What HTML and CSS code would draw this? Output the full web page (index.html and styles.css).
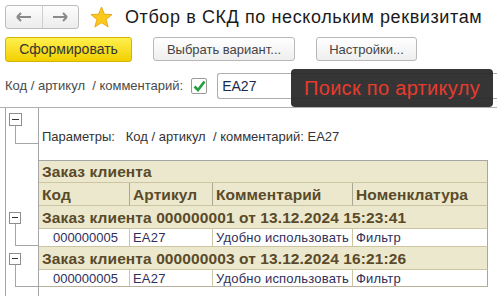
FILE: index.html
```html
<!DOCTYPE html>
<html lang="ru">
<head>
<meta charset="utf-8">
<link rel="stylesheet" href="styles.css">
</head>
<body>
<div class="page">
  <div class="topbar">
    <div class="nav">
      <div class="nav-btn">
        <svg width="16" height="10" viewBox="0 0 16 10"><path d="M1 5H15M1 5L5 1M1 5L5 9" stroke="#8a8a8a" stroke-width="2" fill="none"/></svg>
      </div>
      <div class="nav-btn">
        <svg width="16" height="10" viewBox="0 0 16 10"><path d="M1 5H15M15 5L11 1M15 5L11 9" stroke="#8a8a8a" stroke-width="2" fill="none"/></svg>
      </div>
    </div>
    <svg class="star" width="23" height="22" viewBox="0 0 24 23"><polygon points="12,1 15,8.6 23,9 16.8,14 19,22 12,17.4 5,22 7.2,14 1,9 9,8.6" fill="#fbc81c" stroke="#e9a61a" stroke-width="1" stroke-linejoin="round"/></svg>
    <h1 class="title">Отбор в СКД по нескольким реквизитам</h1>
  </div>
  <div class="buttons">
    <button class="btn btn-primary">Сформировать</button>
    <button class="btn btn-variant">Выбрать вариант...</button>
    <button class="btn btn-settings">Настройки...</button>
  </div>
  <div class="filter">
    <span class="filter-label">Код / артикул&nbsp; / комментарий:</span>
    <span class="checkbox">
      <svg width="13" height="12" viewBox="0 0 13 12"><path d="M1.5 6.5L5 10L11.5 1.5" stroke="#1fa03a" stroke-width="2.6" fill="none"/></svg>
    </span>
    <div class="input">EA27</div>
  </div>
  <div class="tooltip">Поиск по артикулу</div>
  <div class="report">
    <div class="block block-params">
      <div class="tree"><span class="minus"></span><span class="branch branch-params"></span></div>
      <div class="content params">Параметры:&nbsp;&nbsp; Код / артикул&nbsp; / комментарий: EA27</div>
    </div>
    <div class="block">
      <div class="tree"></div>
      <div class="content">
        <div class="grid grid-top">
          <div class="cell span title-row">Заказ клиента</div>
          <div class="cell head">Код</div>
          <div class="cell head">Артикул</div>
          <div class="cell head">Комментарий</div>
          <div class="cell head">Номенклатура</div>
        </div>
      </div>
    </div>
    <div class="block">
      <div class="tree"><span class="minus minus-group"></span><span class="branch branch-group"></span></div>
      <div class="content">
        <div class="grid">
          <div class="cell span group-row">Заказ клиента 000000001 от 13.12.2024 15:23:41</div>
          <div class="cell data code">000000005</div>
          <div class="cell data">EA27</div>
          <div class="cell data">Удобно использовать</div>
          <div class="cell data">Фильтр</div>
        </div>
      </div>
    </div>
    <div class="block">
      <div class="tree"><span class="minus minus-group"></span><span class="branch branch-group"></span></div>
      <div class="content">
        <div class="grid">
          <div class="cell span group-row">Заказ клиента 000000003 от 13.12.2024 16:21:26</div>
          <div class="cell data code last">000000005</div>
          <div class="cell data last">EA27</div>
          <div class="cell data last">Удобно использовать</div>
          <div class="cell data last">Фильтр</div>
        </div>
      </div>
    </div>
    <div class="block block-fill">
      <div class="tree"></div>
      <div class="content"></div>
    </div>
  </div>
</div>
</body>
</html>
```
FILE: styles.css
```css
* { box-sizing: border-box; }
html, body { margin: 0; padding: 0; background: #fff; }
body {
  font-family: "Liberation Sans", Arial, sans-serif;
  width: 497px;
  height: 296px;
  overflow: hidden;
}
.page { position: relative; height: 296px; display: flex; flex-direction: column; }

.topbar { display: flex; align-items: center; padding: 5px 0 0 5px; height: 29px; }
.nav {
  display: flex; width: 74px; height: 24px;
  border: 1px solid #bdbdbd; border-radius: 3px;
  background: linear-gradient(#fdfdfd, #ececec);
}
.nav-btn { flex: 1; display: flex; align-items: center; justify-content: center; }
.nav-btn + .nav-btn { border-left: 1px solid #cfcfcf; }
.star { margin-left: 11px; }
.title {
  margin: 0 0 0 12px; font-weight: normal; font-size: 18px; color: #1a1a1a;
  letter-spacing: 0.6px; white-space: nowrap;
}

.buttons { display: flex; align-items: center; padding: 5px 0 0 5px; height: 35px; }
.btn {
  font-family: "Liberation Sans", Arial, sans-serif;
  border-radius: 3px; padding: 0; margin: 0; cursor: default;
}
.btn-primary {
  width: 127px; height: 25px; font-size: 14px; color: #333;
  border: 1px solid #d2b300;
  background: linear-gradient(#fff04f, #f2d000);
}
.btn-variant, .btn-settings {
  height: 24px; font-size: 13px; color: #444;
  border: 1px solid #b8b8b8;
  background: linear-gradient(#ffffff, #eeeeee);
}
.btn-variant { width: 142px; margin-left: 21px; }
.btn-settings { width: 101px; margin-left: 21px; }

.filter { display: flex; align-items: center; height: 44px; padding-left: 5px; border-bottom: 1px solid #b0b0b0; }
.filter-label { font-size: 13px; color: #4a4a4a; white-space: nowrap; }
.checkbox {
  width: 16px; height: 16px; margin-left: 8px;
  border: 1px solid #9a9a9a; border-radius: 2px; background: #fff;
  display: flex; align-items: center; justify-content: center;
}
.input {
  flex: 1; margin-left: 10px; height: 26px;
  border: 1px solid #adadad; border-right: none; border-radius: 3px 0 0 3px;
  font-size: 14px; color: #1b2a4a; line-height: 24px; padding-left: 4px;
}

.tooltip {
  position: absolute; left: 291px; top: 69px; width: 202px; height: 38px;
  background: rgba(40, 40, 40, 0.94); border-radius: 4px;
  color: #e73b2d; font-size: 20px; line-height: 38px; text-align: center;
  letter-spacing: 0.3px;
}

.report { flex: 1; margin-left: 5px; border-left: 1px solid #a6a6a6; display: flex; flex-direction: column; }
.block { display: flex; }
.block-fill { flex: 1; }
.tree { width: 33px; flex: none; border-right: 1px solid #a6a6a6; }
.content { flex: 1; }

.minus {
  display: block; width: 13px; height: 13px; margin: 5px 0 0 3px;
  border: 1px solid #8d8d8d; background: #fff; position: relative;
}
.minus::after {
  content: ""; position: absolute; left: 2px; right: 2px; top: 5px; height: 1px; background: #333;
}
.minus-group { margin-top: 6px; width: 12px; height: 12px; }
.minus-group::after { top: 4px; }
.branch { display: block; margin-left: 9px; border-left: 1px solid #a6a6a6; border-bottom: 1px solid #a6a6a6; }
.branch-params { height: 18px; }
.branch-group { height: 22px; }

.block-params { height: 52px; }
.params { font-size: 13px; color: #333; padding: 21px 0 0 3px; white-space: nowrap; }

.grid {
  display: grid; grid-template-columns: 91px 83px 140px 135px;
  width: 449px;
}
.grid-top { border-top: 1px solid #a6a6a6; }
.cell { white-space: nowrap; overflow: hidden; border-right: 1px solid #aaa795; }
.span { grid-column: 1 / -1; }
.title-row, .head, .group-row {
  background: #ebe8cd; color: #5a4a2a; font-weight: bold; font-size: 15.5px;
  letter-spacing: 0.1px;
}
.title-row { height: 22px; line-height: 21px; padding-left: 3px; border-bottom: 1px solid #cdc5a2; }
.head { height: 23px; line-height: 23px; padding-left: 3px; border-bottom: 1px solid #cdc5a2; }
.group-row { height: 23px; line-height: 23px; padding-left: 3px; border-bottom: 1px solid #cdc5a2; }
.data {
  height: 18px; line-height: 17px; font-size: 13px; color: #2f2f5a;
  padding-left: 3px; border-bottom: 1px solid #cdc5a2; border-right-color: #cdc5a2;
  letter-spacing: 0.2px;
}
.data:last-child { border-right-color: #aaa795; }
.data.last { height: 17px; border-bottom-color: #b8b09a; }
.code { padding-left: 0; padding-right: 11px; text-align: right; letter-spacing: 0; }
```
